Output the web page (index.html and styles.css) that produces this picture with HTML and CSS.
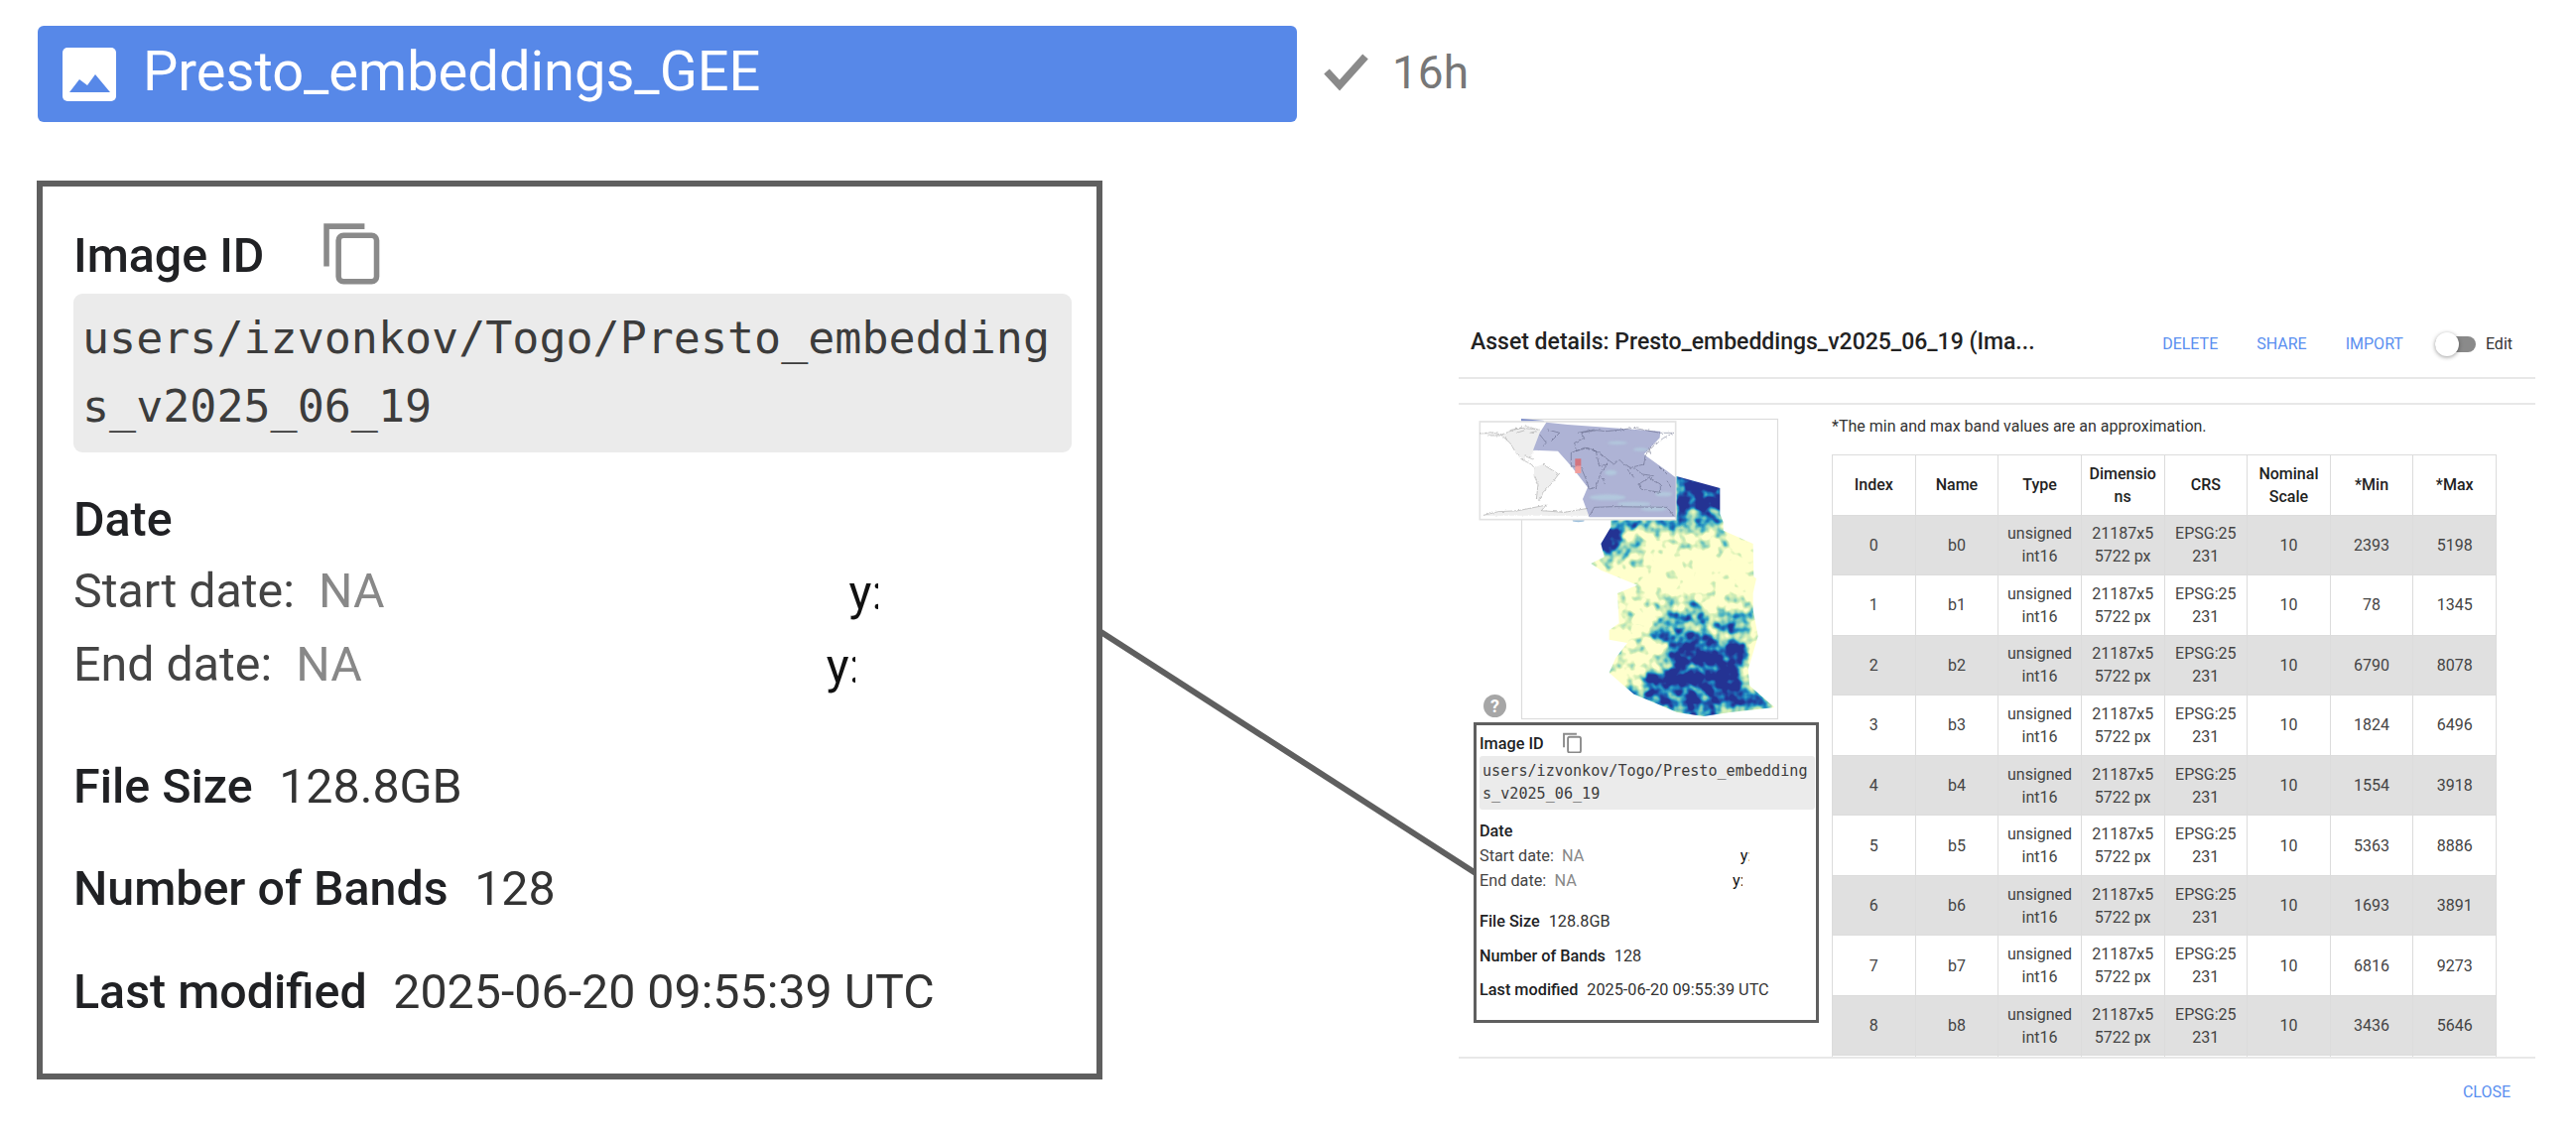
FILE: index.html
```html
<!DOCTYPE html>
<html lang="en">
<head>
<meta charset="utf-8">
<title>Presto_embeddings_GEE</title>
<link rel="stylesheet" href="styles.css">
</head>
<body>
<div class="figure">
  <svg class="connector" viewBox="0 0 2596 1148" aria-hidden="true"><line x1="1108" y1="636" x2="1487" y2="880"/></svg>

  <section class="left">
    <div class="task">
      <div class="task-bar">
        <svg class="task-icon" viewBox="0 0 54 54" aria-hidden="true"><rect width="54" height="54" rx="5" fill="#fff"/><path d="M7 45 L17 32 L25 38 L33 27 L48 45 Z" fill="#5788e8"/></svg>
        <span class="task-name">Presto_embeddings_GEE</span>
      </div>
      <svg class="task-check" viewBox="0 0 50 42" aria-hidden="true"><path d="M5 20 L18 34 L44 5" /></svg>
      <span class="task-age">16h</span>
    </div>

    <div class="panel panel-big">
      <div class="panel-head">
        <span class="strong">Image ID</span>
        <svg class="copy" viewBox="0 0 56 63" aria-hidden="true"><path class="copy-back" d="M3 45 V5 H41"/><rect class="copy-front" x="15" y="14" width="38" height="46" rx="5"/></svg>
      </div>
      <div class="path">users/izvonkov/Togo/Presto_embeddings_v2025_06_19</div>
      <div class="strong date-head">Date</div>
      <div class="date-row">Start date:<span class="na">NA</span><span class="clip">y:</span></div>
      <div class="date-row">End date:<span class="na">NA</span><span class="clip">y:</span></div>
      <div class="meta meta-first"><span class="strong">File Size</span><span class="val">128.8GB</span></div>
      <div class="meta"><span class="strong">Number of Bands</span><span class="val">128</span></div>
      <div class="meta"><span class="strong">Last modified</span><span class="val">2025-06-20 09:55:39 UTC</span></div>
    </div>
  </section>

  <section class="dialog">
    <header class="dialog-head">
      <h1 class="dialog-title">Asset details: Presto_embeddings_v2025_06_19 (Ima...</h1>
      <div class="actions">
        <span class="link">DELETE</span>
        <span class="link">SHARE</span>
        <span class="link">IMPORT</span>
        <span class="toggle"><span class="knob"></span></span>
        <span class="edit">Edit</span>
      </div>
    </header>
    <div class="band"></div>
    <div class="dialog-body">
      <div class="side">
        <div class="map">
          <svg class="map-svg" viewBox="1485 410 320 320" aria-hidden="true">
            <defs>
              <filter id="ramp" x="0" y="0" width="100%" height="100%" color-interpolation-filters="sRGB">
                <feTurbulence type="fractalNoise" baseFrequency="0.032" numOctaves="2" seed="23" result="noise"/>
                <feColorMatrix in="noise" type="matrix" values="1 0 0 0 0 1 0 0 0 0 1 0 0 0 0 0 0 0 0 1" result="gray"/>
                <feGaussianBlur in="SourceGraphic" stdDeviation="12" result="field"/>
                <feComposite in="field" in2="gray" operator="arithmetic" k1="0" k2="1.3" k3="1.7" k4="-1.08"/>
                <feGaussianBlur stdDeviation="2"/>
                <feComponentTransfer>
                  <feFuncR type="table" tableValues="1 .86 .72 .5 .25 .11 .13 .145"/>
                  <feFuncG type="table" tableValues="1 .95 .89 .8 .68 .5 .33 .2"/>
                  <feFuncB type="table" tableValues=".8 .72 .72 .73 .77 .75 .66 .58"/>
                </feComponentTransfer>
              </filter>
              <filter id="rough" x="-5%" y="-5%" width="110%" height="110%">
                <feTurbulence type="fractalNoise" baseFrequency="0.12" numOctaves="2" seed="5" result="wobble"/>
                <feDisplacementMap in="SourceGraphic" in2="wobble" scale="9" xChannelSelector="R" yChannelSelector="G"/>
              </filter>
              <clipPath id="raster">
                <path d="M686 245 L820 282 L820 360 L830 385 L830 410 L920 450 L922 550 L930 555 L920 600 L920 650 L935 730 L920 780 L905 830 L910 880 L985 945 L850 960 L770 972 L690 960 L620 930 L560 905 L530 880 L485 840 L505 795 L540 750 L485 740 L485 712 L515 690 L510 600 L570 575 L460 530 L430 510 L470 490 L460 450 L490 400 L490 378 L686 378 Z"/>
              </clipPath>
            </defs>

            <rect class="frame" x="1533.5" y="424.5" width="258" height="302"/>
            <path class="sliver" d="M1533 424 L1556 426 L1556 430 L1533 427 Z"/>

            <g transform="translate(1460 400) scale(.33333)">
              <g class="soft" clip-path="url(#raster)">
                <g filter="url(#ramp)">
                  <rect x="400" y="220" width="600" height="780" fill="#000"/>
                  <rect x="686" y="225" width="160" height="135" fill="#fff"/>
                  <rect x="686" y="350" width="150" height="30" fill="#aaa"/>
                  <rect x="480" y="370" width="360" height="40" fill="#aaa"/>
                  <rect x="560" y="410" width="300" height="80" fill="#2a2a2a"/>
                  <ellipse cx="490" cy="450" rx="45" ry="45" fill="#fff"/>
                  <ellipse cx="440" cy="508" rx="26" ry="14" fill="#ccc"/>
                  <ellipse cx="545" cy="470" rx="40" ry="60" fill="#666"/>
                  <rect x="520" y="590" width="120" height="50" fill="#333"/>
                  <ellipse cx="525" cy="650" rx="24" ry="45" fill="#666"/>
                  <ellipse cx="705" cy="640" rx="75" ry="30" fill="#777"/>
                  <ellipse cx="870" cy="655" rx="60" ry="50" fill="#666"/>
                  <ellipse cx="770" cy="715" rx="175" ry="55" fill="#888"/>
                  <ellipse cx="660" cy="705" rx="65" ry="13" fill="#fff"/>
                  <ellipse cx="560" cy="800" rx="70" ry="50" fill="#444"/>
                  <ellipse cx="780" cy="790" rx="130" ry="60" fill="#eee"/>
                  <ellipse cx="750" cy="865" rx="160" ry="48" fill="#fff"/>
                  <ellipse cx="680" cy="915" rx="170" ry="40" fill="#ccc"/>
                  <ellipse cx="900" cy="925" rx="80" ry="30" fill="#ddd"/>
                  <ellipse cx="770" cy="962" rx="80" ry="15" fill="#fff"/>
                  <ellipse cx="820" cy="733" rx="36" ry="9" fill="#000" transform="rotate(25 820 733)"/>
                </g>
              </g>
              <ellipse class="spot" cx="392" cy="380" rx="18" ry="5"/>
            </g>

            <g class="soft" transform="translate(1480 415) scale(.33333)">
              <rect class="inset" x="34" y="36" width="592" height="296"/>
              <g filter="url(#rough)">
                <path class="land" d="M35 72 L70 68 L100 75 L125 65 L160 55 L215 60 L230 85 L245 105 L215 120 L195 125 L190 145 L170 140 L172 155 L195 170 L190 165 L160 150 L140 125 L125 100 L100 78 L60 78 Z"/>
                <path class="land" d="M198 175 L225 165 L250 180 L272 195 L250 225 L225 250 L215 275 L205 270 L210 225 L198 200 Z"/>
                <path class="land" d="M40 320 L90 308 L150 305 L235 288 L220 305 L290 310 L380 295 L440 293 L600 295 L620 320 Z"/>
              </g>
              <path class="lilac" d="M235 38 L300 45 L580 65 L578 85 L530 135 L600 185 L626 205 L626 325 L365 325 L345 270 L360 235 L310 170 L270 125 L195 122 L215 70 Z"/>
              <g class="patches">
                <ellipse cx="450" cy="100" rx="30" ry="5"/><ellipse cx="520" cy="120" rx="22" ry="5"/>
                <ellipse cx="420" cy="265" rx="55" ry="9"/><ellipse cx="500" cy="285" rx="50" ry="7"/>
                <ellipse cx="560" cy="300" rx="40" ry="6"/><ellipse cx="430" cy="190" rx="18" ry="8"/>
                <ellipse cx="590" cy="255" rx="26" ry="7"/>
              </g>
              <g filter="url(#rough)">
                <path class="coast" d="M320 100 L350 85 L340 70 L385 62 L420 65 L500 55 L580 70 L620 70 L590 85 L555 110 L535 135 L530 165 L510 170 L490 175 L470 165 L455 150 L440 165 L420 150 L395 130 L360 115 L325 125 Z"/>
                <path class="coast" d="M310 130 L350 115 L385 125 L395 170 L420 165 L400 190 L385 235 L365 240 L355 210 L340 175 L310 170 Z"/>
                <path class="coast" d="M515 225 L545 205 L580 225 L580 250 L545 245 L520 240 Z"/>
                <path class="coast" d="M500 175 L525 195 L560 200 M480 180 L500 205 M575 170 L600 195 M600 215 L612 235 M405 205 L412 225 M545 115 L552 135"/>
                <path class="coast" d="M215 75 L235 100 L225 110 M240 60 L275 70 L250 95 M330 70 L380 60"/>
                <path class="coast" d="M365 322 L380 295 L440 293 L600 295 L620 320"/>
                <path class="coast-thin" d="M35 72 L70 68 L100 75 L125 65 L160 55 L215 60 M60 78 L100 78 L125 100 L140 125 L160 150 L190 165 L198 175 M225 165 L272 195 L250 225 L225 250 L215 275 L205 270 L210 225 L198 200 M125 62 L175 50 L205 58 M145 70 L170 62 M185 70 L205 65 M170 140 L195 150 M40 320 L90 308 L150 305 L235 288 L220 305 L290 310 L360 298"/>
              </g>
              <rect class="red-top" x="322" y="148" width="18" height="22"/>
              <rect class="red-low" x="322" y="170" width="18" height="22"/>
            </g>
          </svg>
          <span class="help">?</span>
        </div>

        <div class="panel panel-mini">
          <div class="panel-head">
            <span class="strong">Image ID</span>
            <svg class="copy" viewBox="0 0 56 63" aria-hidden="true"><path class="copy-back" d="M3 45 V5 H41"/><rect class="copy-front" x="15" y="14" width="38" height="46" rx="5"/></svg>
          </div>
          <div class="path">users/izvonkov/Togo/Presto_embeddings_v2025_06_19</div>
          <div class="strong date-head">Date</div>
          <div class="date-row">Start date:<span class="na">NA</span><span class="clip">y:</span></div>
          <div class="date-row">End date:<span class="na">NA</span><span class="clip">y:</span></div>
          <div class="meta meta-first"><span class="strong">File Size</span><span class="val">128.8GB</span></div>
          <div class="meta"><span class="strong">Number of Bands</span><span class="val">128</span></div>
          <div class="meta"><span class="strong">Last modified</span><span class="val">2025-06-20 09:55:39 UTC</span></div>
        </div>
      </div>

      <div class="bands">
        <p class="note">*The min and max band values are an approximation.</p>
        <table class="band-table">
          <thead>
            <tr><th>Index</th><th>Name</th><th>Type</th><th>Dimensions</th><th>CRS</th><th>Nominal Scale</th><th>*Min</th><th>*Max</th></tr>
          </thead>
          <tbody>
            <tr><td>0</td><td>b0</td><td>unsigned int16</td><td>21187x55722 px</td><td>EPSG:25231</td><td>10</td><td>2393</td><td>5198</td></tr>
            <tr><td>1</td><td>b1</td><td>unsigned int16</td><td>21187x55722 px</td><td>EPSG:25231</td><td>10</td><td>78</td><td>1345</td></tr>
            <tr><td>2</td><td>b2</td><td>unsigned int16</td><td>21187x55722 px</td><td>EPSG:25231</td><td>10</td><td>6790</td><td>8078</td></tr>
            <tr><td>3</td><td>b3</td><td>unsigned int16</td><td>21187x55722 px</td><td>EPSG:25231</td><td>10</td><td>1824</td><td>6496</td></tr>
            <tr><td>4</td><td>b4</td><td>unsigned int16</td><td>21187x55722 px</td><td>EPSG:25231</td><td>10</td><td>1554</td><td>3918</td></tr>
            <tr><td>5</td><td>b5</td><td>unsigned int16</td><td>21187x55722 px</td><td>EPSG:25231</td><td>10</td><td>5363</td><td>8886</td></tr>
            <tr><td>6</td><td>b6</td><td>unsigned int16</td><td>21187x55722 px</td><td>EPSG:25231</td><td>10</td><td>1693</td><td>3891</td></tr>
            <tr><td>7</td><td>b7</td><td>unsigned int16</td><td>21187x55722 px</td><td>EPSG:25231</td><td>10</td><td>6816</td><td>9273</td></tr>
            <tr><td>8</td><td>b8</td><td>unsigned int16</td><td>21187x55722 px</td><td>EPSG:25231</td><td>10</td><td>3436</td><td>5646</td></tr>
            <tr><td></td><td></td><td></td><td></td><td></td><td></td><td></td><td></td></tr>
          </tbody>
        </table>
      </div>
    </div>
    <footer class="dialog-foot"><span class="link">CLOSE</span></footer>
  </section>
</div>
</body>
</html>
```

FILE: styles.css
```css
* { box-sizing: border-box; }

html, body {
  margin: 0;
  background: #fff;
}

body {
  font-family: Roboto, "Liberation Sans", sans-serif;
  color: #202124;
}

.figure {
  position: relative;
  display: flex;
  width: 2596px;
  height: 1148px;
  overflow: hidden;
}

.connector {
  position: absolute;
  left: 0;
  top: 0;
  width: 2596px;
  height: 1148px;
  pointer-events: none;
}
.connector line { stroke: #5f5f5f; stroke-width: 6; }

/* left column */
.left {
  width: 1470px;
  flex: none;
  padding: 26px 0 0 37px;
}

.task {
  display: flex;
  align-items: center;
  height: 97px;
  margin-left: 1px;
}

.task-bar {
  display: flex;
  align-items: center;
  flex: none;
  width: 1269px;
  height: 97px;
  padding-left: 25px;
  background: #5788e8;
  border-radius: 6px;
  color: #fff;
}

.task-icon { width: 54px; height: 54px; flex: none; }

.task-name {
  margin-left: 27px;
  font-size: 56px;
  line-height: 1;
  margin-top: -6px;
}

.task-check {
  width: 50px;
  height: 42px;
  margin-left: 25px;
  margin-top: -3px;
  flex: none;
}
.task-check path { fill: none; stroke: #8a8a8a; stroke-width: 7.5; }

.task-age {
  margin-left: 21px;
  font-size: 46px;
  color: #777;
  margin-top: -3px;
}

/* info panel, shared by both sizes: everything scales in em */
.panel {
  border: solid #5f5f5f;
  background: #fff;
  position: relative;
}

.panel-big {
  width: 1074px;
  height: 906px;
  margin-top: 59px;
  border-width: 6px;
  padding: 16px 0 0 31px;
  font-size: 48.35px;
}

.panel-mini {
  width: 348px;
  height: 303px;
  border-width: 3px;
  padding: 0 0 0 3px;
  font-size: 16.25px;
}

.panel-head {
  display: flex;
  align-items: center;
  height: 1.91em;
  padding-top: 0.31em;
}

.strong { font-weight: 500; }

.copy {
  width: 1.17em;
  height: 1.32em;
  margin-left: 1.17em;
  flex: none;
  margin-top: -0.1em;
}
.panel-big .copy { margin-left: 1.24em; }
.copy-back, .copy-front { fill: none; stroke: #8a8a8a; stroke-width: 5.5; }

.path {
  padding: 0.24em 0.2em;
  background: #ebebeb;
  border-radius: 0.2em;
  font-family: "DejaVu Sans Mono", "Liberation Mono", monospace;
  font-size: 0.9307em;
  width: 22.35em;
  line-height: 1.53;
  word-break: break-all;
  color: #3c3c3c;
}

.date-head {
  margin-top: 0.66em;
  line-height: 1.5;
}

.date-row {
  line-height: 1.5;
  color: #444;
  white-space: nowrap;
  display: flex;
}

.na {
  margin-left: 0.5em;
  color: #888;
}

.clip {
  display: inline-block;
  width: 0.6em;
  overflow: hidden;
  margin-left: 9.68em;
  color: #111;
  padding-top: 0.04em;
}

.meta {
  margin-top: 0.64em;
  line-height: 1.5;
  white-space: nowrap;
}
.meta-first { margin-top: 0.99em; }
.val {
  margin-left: 0.55em;
  color: #333;
}

/* dialog */
.dialog {
  width: 1085px;
  flex: none;
  margin-top: 304px;
  display: flex;
  flex-direction: column;
  align-self: flex-start;
}

.dialog-head {
  display: flex;
  align-items: center;
  justify-content: space-between;
  height: 78px;
  padding: 5px 23px 0 12px;
  border-bottom: 2px solid #e8e8e8;
}

.dialog-title {
  margin: 0;
  font-size: 23px;
  font-weight: 500;
  color: #222;
}

.actions {
  display: flex;
  align-items: center;
  font-size: 16px;
  margin-top: 4px;
}

.link { color: #5a8ff0; font-size: 16px; }
.actions .link { margin-right: 39px; }
.actions .link:nth-child(3) { margin-right: 32px; }

.toggle {
  position: relative;
  display: block;
  width: 41px;
  height: 16px;
  border-radius: 8px;
  background: #8a8a8a;
}

.knob {
  position: absolute;
  left: 0;
  top: -4px;
  width: 24px;
  height: 24px;
  border-radius: 50%;
  background: #fff;
  box-shadow: 0 1px 4px rgba(0, 0, 0, .4);
}

.edit { margin-left: 10px; color: #333; }

.band {
  height: 26px;
  border-bottom: 2px solid #e8e8e8;
}

.dialog-body {
  display: flex;
  height: 659px;
  overflow: hidden;
  border-bottom: 2px solid #e8e8e8;
}

.side {
  width: 376px;
  flex: none;
  padding-left: 15px;
}

.map {
  position: relative;
  width: 320px;
  height: 320px;
}

.map-svg { display: block; width: 320px; height: 320px; }

.frame { fill: #fff; stroke: #dcdcdc; stroke-width: 1.2; }
.sliver { fill: #7f8fcb; }
.spot { fill: #9ec0dc; }
.soft { filter: blur(.6px); }
.inset { fill: #fff; stroke: #e2e2e2; stroke-width: 5; }
.land { fill: #eeeeee; }
.lilac { fill: #aeb3d5; }
.patches ellipse { fill: #b2c8dd; filter: blur(3px); }
.coast { fill: none; stroke: #4f5573; stroke-width: 1.4; }
.coast-thin { fill: none; stroke: #8b8b8b; stroke-width: 1.4; }
.red-top { fill: #d9686f; fill-opacity: .85; }
.red-low { fill: #f79a96; fill-opacity: .9; }

.help {
  position: absolute;
  left: 10px;
  top: 292px;
  width: 23px;
  height: 23px;
  border-radius: 50%;
  background: #a6a6a6;
  color: #fff;
  font-size: 18px;
  font-weight: 700;
  line-height: 23px;
  text-align: center;
}

.bands { flex: 1; min-width: 0; }

.note {
  margin: 13px 0 0;
  font-size: 16px;
  line-height: 18px;
  color: #333;
}

.band-table {
  width: 670px;
  margin-top: 19px;
  border-collapse: collapse;
  table-layout: fixed;
  font-size: 16px;
  line-height: 23px;
  text-align: center;
}

.band-table th,
.band-table td {
  height: 60.55px;
  padding: 0 7px;
  border: 1.5px solid #dcdcdc;
  word-break: break-all;
}

.band-table th { font-weight: 500; color: #222; }
.band-table td { color: #444; }
.band-table tbody tr:nth-child(odd) { background: #e0e0e0; }
.band-table tbody tr:last-child { background: #fff; }

.dialog-foot {
  display: flex;
  justify-content: flex-end;
  padding: 24px 25px 0 0;
}
```
